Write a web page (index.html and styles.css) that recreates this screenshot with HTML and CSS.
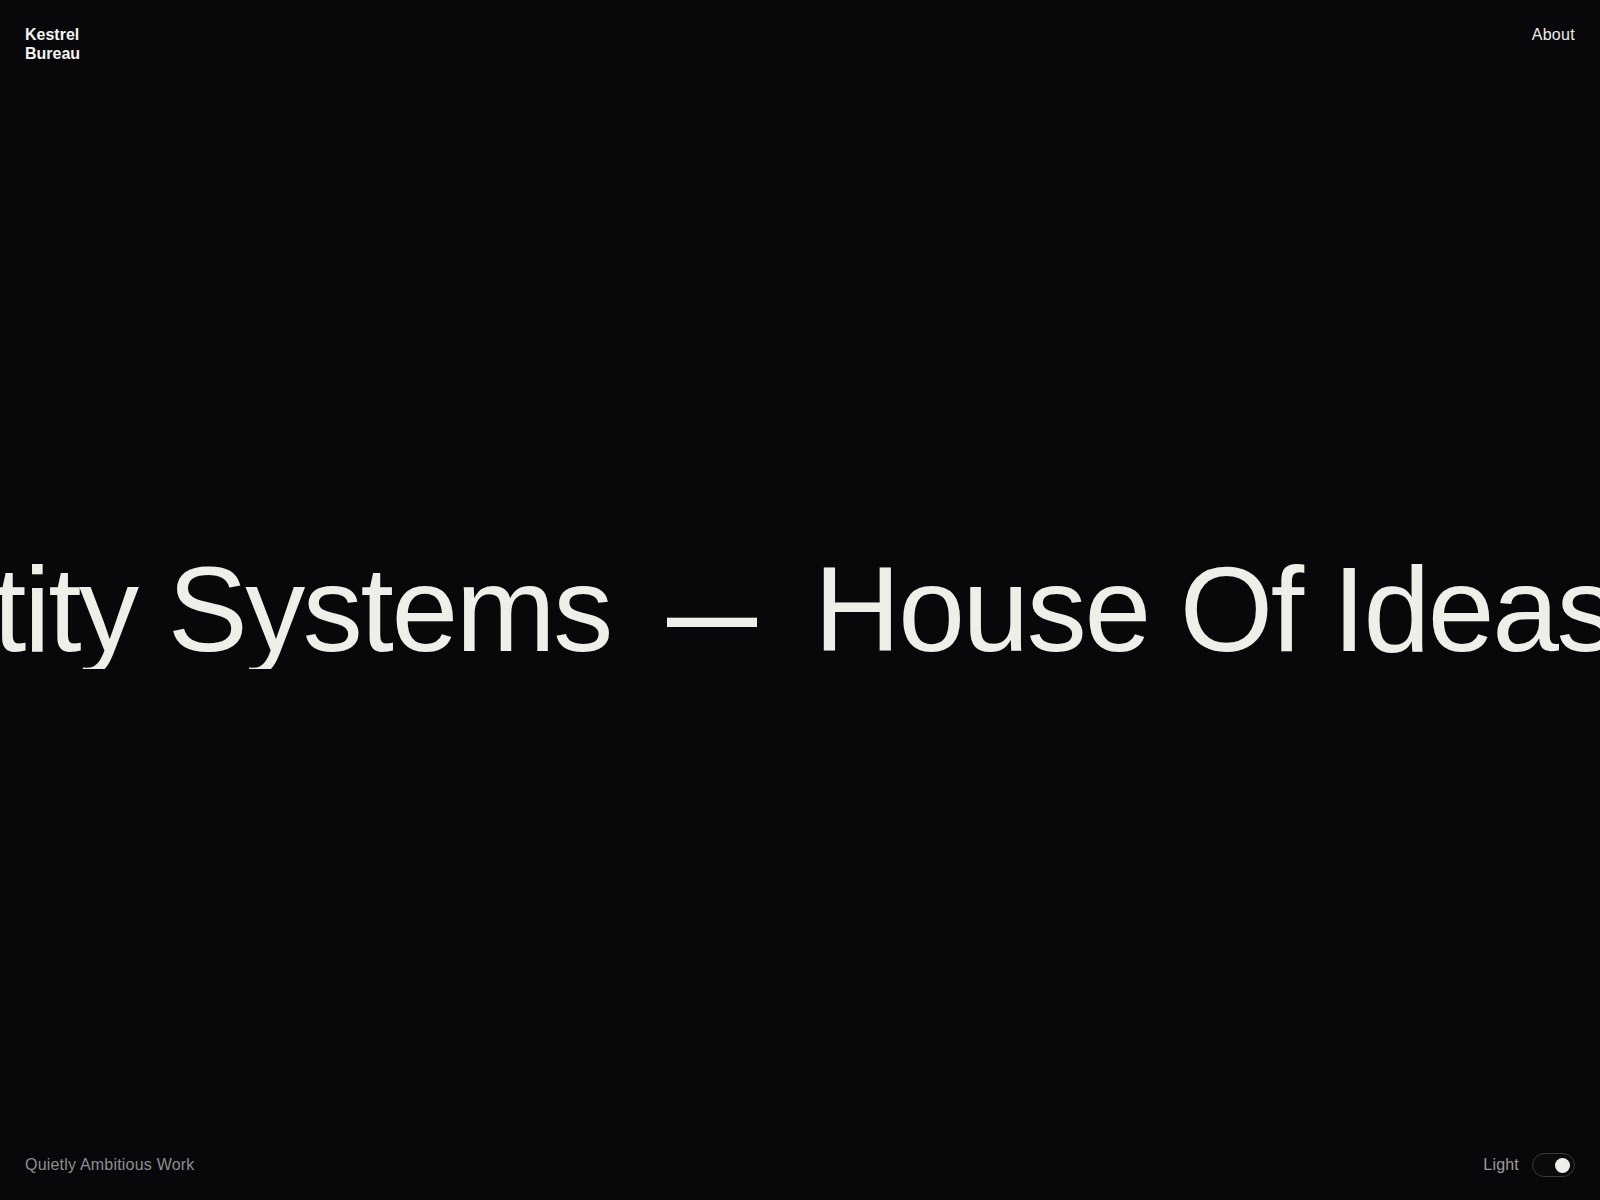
FILE: index.html
```html
<!DOCTYPE html>
<html lang="en">
<head>
<meta charset="utf-8">
<title>Kestrel Bureau</title>
<link rel="stylesheet" href="styles.css">
</head>
<body>
<div class="page">
  <header class="top">
    <a class="logo" href="#">Kestrel<br>Bureau</a>
    <nav class="nav"><a href="#">About</a></nav>
  </header>
  <main class="stage">
    <div class="marquee">
      <div class="track">
        <span class="phrase">Identity Systems</span>
        <span class="sep">—</span>
        <span class="phrase">House Of Ideas</span>
        <span class="sep">—</span>
        <span class="phrase">Identity Systems</span>
        <span class="sep">—</span>
        <span class="phrase">House Of Ideas</span>
      </div>
    </div>
  </main>
  <footer class="bottom">
    <span class="tagline">Quietly Ambitious Work</span>
    <div class="theme">
      <span class="theme-label">Light</span>
      <button class="toggle" aria-label="Toggle light mode"><span class="knob"></span></button>
    </div>
  </footer>
</div>
</body>
</html>
```
FILE: styles.css
```css
* { box-sizing: border-box; }
html, body { margin: 0; padding: 0; }
body {
  background: #08080a;
  color: #f0efeb;
  font-family: "Liberation Sans", Arial, Helvetica, sans-serif;
  font-size: 16px;
  line-height: 1.2;
}
a { color: inherit; text-decoration: none; }
.page {
  height: 100vh;
  display: flex;
  flex-direction: column;
  overflow: hidden;
}
.top {
  display: flex;
  justify-content: space-between;
  align-items: flex-start;
  padding: 25px 25px 0 25px;
}
.logo {
  font-weight: 700;
  color: #f4f4f2;
}
.nav a {
  color: #ececea;
  letter-spacing: 0.3px;
}
.stage {
  flex: 1;
  display: flex;
  align-items: center;
  padding-top: 2px;
  overflow: hidden;
}
.marquee {
  width: 100%;
  overflow: hidden;
}
.track {
  display: flex;
  align-items: baseline;
  gap: 54px;
  white-space: nowrap;
  font-size: 120px;
  line-height: 1;
  letter-spacing: -0.02em;
  color: #efeee9;
  transform: translateX(-231px);
}
.sep {
  display: inline-block;
  transform: scaleX(0.75) scaleY(1.15);
  margin: 0 -12px 0 -13px;
  letter-spacing: 0;
}
.bottom {
  display: flex;
  justify-content: space-between;
  align-items: center;
  padding: 0 25px 23px 25px;
}
.tagline {
  color: #8e8e8e;
  letter-spacing: 0.2px;
}
.theme {
  display: flex;
  align-items: center;
  gap: 13px;
}
.theme-label {
  color: #9c9c9c;
  letter-spacing: 0.2px;
}
.toggle {
  width: 43px;
  height: 24px;
  border-radius: 12px;
  border: 1px solid #38383a;
  background: #0b0b0d;
  padding: 0 4px;
  display: flex;
  align-items: center;
  justify-content: flex-end;
  cursor: pointer;
}
.knob {
  width: 15px;
  height: 15px;
  border-radius: 50%;
  background: #f0efeb;
}
```
